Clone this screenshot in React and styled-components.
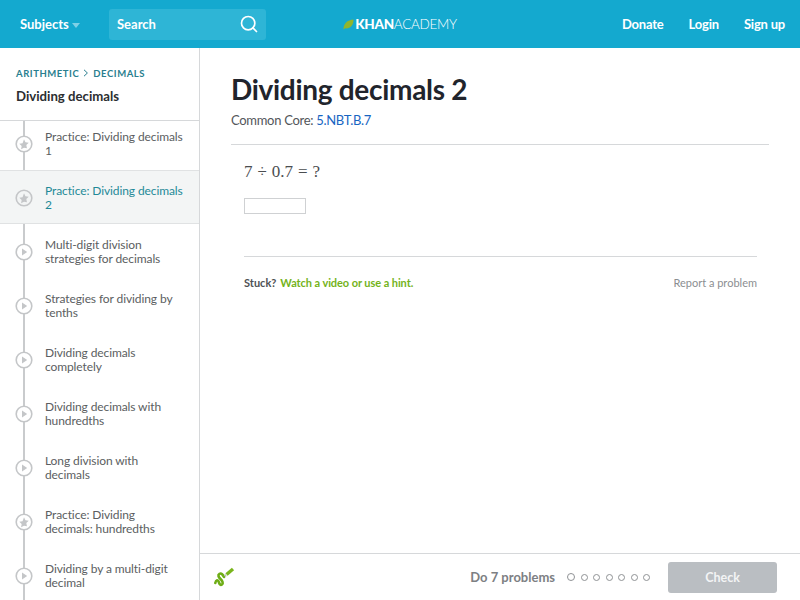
import React from "react";
import styled, { createGlobalStyle } from "styled-components";
import { Search } from "lucide-react";

const GlobalStyle = createGlobalStyle`
  html, body {
    margin: 0;
    height: 100%;
    overflow: hidden;
  }
  body {
    font-family: Lato, "Noto Sans", sans-serif;
    color: #3b3e40;
    background: #fff;
  }
`;

const Page = styled.div`
  width: 800px;
  height: 600px;
  display: flex;
  flex-direction: column;
  overflow: hidden;
`;

const Header = styled.header`
  height: 48px;
  flex: none;
  background: #14a9cf;
  display: grid;
  grid-template-columns: 1fr auto 1fr;
  align-items: center;
  color: #fff;
  font-size: 13px;
  font-weight: 700;
`;

const HeaderLeft = styled.div`
  display: flex;
  align-items: center;
  padding-left: 20px;
`;

const SubjectsMenu = styled.div`
  display: flex;
  align-items: center;
  gap: 3px;
  width: 89px;
`;

const Caret = styled.span`
  width: 0;
  height: 0;
  margin-top: 2px;
  border-left: 4px solid transparent;
  border-right: 4px solid transparent;
  border-top: 5px solid #7fd0e6;
`;

const SearchBox = styled.div`
  width: 157px;
  height: 31px;
  box-sizing: border-box;
  padding: 0 7px 0 8px;
  border-radius: 3px;
  background: #2eb5d6;
  display: flex;
  align-items: center;
  justify-content: space-between;
`;

const Logo = styled.div`
  display: flex;
  align-items: center;
  gap: 1px;
  font-size: 13.5px;
  letter-spacing: -0.3px;
`;

const LogoBold = styled.span`
  font-weight: 900;
`;

const LogoLight = styled.span`
  font-weight: 300;
`;

const HeaderNav = styled.nav`
  display: flex;
  justify-content: flex-end;
  gap: 25px;
  padding-right: 15px;
  letter-spacing: -0.2px;
`;

const Body = styled.div`
  flex: 1;
  min-height: 0;
  display: flex;
`;

const Sidebar = styled.aside`
  width: 200px;
  flex: none;
  box-sizing: border-box;
  border-right: 1px solid #d6d8da;
  overflow: hidden;
`;

const SidebarHead = styled.div`
  height: 73px;
  box-sizing: border-box;
  padding: 19px 16px 0;
  border-bottom: 1px solid #d6d8da;
`;

const Breadcrumb = styled.div`
  display: flex;
  align-items: center;
  gap: 4px;
  height: 12px;
  font-size: 9.5px;
  font-weight: 700;
  letter-spacing: 0.55px;
  color: #2a7f8f;
`;

const SidebarTitle = styled.div`
  margin-top: 9px;
  font-size: 13.2px;
  font-weight: 700;
  color: #2b2e31;
`;

const Lessons = styled.ul`
  list-style: none;
  margin: 0;
  padding: 0;
  position: relative;
`;

const Rail = styled.div`
  position: absolute;
  left: 23px;
  top: 0;
  bottom: 0;
  width: 2px;
  background: #c9cbcd;
`;

const Lesson = styled.li`
  position: relative;
  height: ${(p) => (p.$first ? 49 : 54)}px;
  box-sizing: border-box;
  display: flex;
  align-items: center;
  padding: ${(p) => (p.$first ? "0 14px 3px 45px" : "2px 14px 0 45px")};
  font-size: 12px;
  line-height: 14px;
  letter-spacing: -0.1px;
  color: ${(p) => (p.$active ? "#1f8a98" : "#5b5e61")};
  background: ${(p) => (p.$active ? "#f3f5f5" : "transparent")};
  border-top: ${(p) => (p.$active ? "1px solid #e0e2e3" : "none")};
  border-bottom: ${(p) => (p.$active ? "1px solid #e0e2e3" : "none")};
`;

const Badge = styled.svg`
  position: absolute;
  left: 15px;
  top: 50%;
  width: 18px;
  height: 18px;
  margin-top: ${(p) => (p.$first ? -10.5 : -8)}px;
`;

const Main = styled.main`
  flex: 1;
  min-width: 0;
  display: flex;
  flex-direction: column;
`;

const Content = styled.div`
  flex: 1;
  min-height: 0;
  padding: 0 31px;
`;

const Title = styled.h1`
  margin: 23px 0 0;
  font-size: 28px;
  line-height: 36px;
  font-weight: 700;
  letter-spacing: -0.3px;
  color: #21242c;
`;

const Standard = styled.div`
  height: 38px;
  padding-top: 5px;
  box-sizing: border-box;
  font-size: 13px;
  line-height: 17px;
  letter-spacing: -0.3px;
  color: #53565a;
  border-bottom: 1px solid #d6d8da;
`;

const StandardLink = styled.span`
  color: #1865c2;
`;

const Exercise = styled.div`
  padding: 0 12px 0 13px;
`;

const MathLine = styled.div`
  margin-top: 17px;
  height: 20px;
  font-family: "Liberation Serif", "DejaVu Serif", serif;
  font-size: 17px;
  line-height: 20px;
  color: #4a4d50;
  word-spacing: 0.7px;
`;

const AnswerInput = styled.div`
  width: 62px;
  height: 16px;
  margin-top: 16px;
  box-sizing: border-box;
  border: 1px solid #cfd1d3;
  background: #fff;
`;

const HelpRow = styled.div`
  margin-top: 42px;
  padding-top: 19px;
  border-top: 1px solid #d6d8da;
  display: flex;
  justify-content: space-between;
  font-size: 11px;
  line-height: 14px;
`;

const Stuck = styled.strong`
  color: #4e5154;
`;

const HintLink = styled.span`
  margin-left: 4px;
  font-weight: 700;
  letter-spacing: -0.07px;
  color: #74b31b;
`;

const Report = styled.span`
  color: #8b8e91;
`;

const Footer = styled.footer`
  height: 47px;
  flex: none;
  box-sizing: border-box;
  border-top: 1px solid #d6d8da;
  display: flex;
  align-items: center;
  padding: 0 23px 0 13px;
`;

const FooterProgress = styled.div`
  margin-left: auto;
  display: flex;
  align-items: center;
`;

const ProblemCount = styled.span`
  font-size: 13px;
  font-weight: 700;
  color: #7d8083;
`;

const Dots = styled.div`
  display: flex;
  align-items: center;
  gap: 5.5px;
  margin: 0 18px 0 12px;
`;

const Dot = styled.span`
  width: ${(p) => (p.$big ? 8 : 7)}px;
  height: ${(p) => (p.$big ? 8 : 7)}px;
  box-sizing: border-box;
  border: 1px solid #8f9295;
  border-radius: 50%;
`;

const CheckButton = styled.div`
  width: 109px;
  height: 31px;
  border-radius: 3px;
  background: #babec2;
  color: #f3f4f5;
  font-size: 12.5px;
  font-weight: 700;
  display: flex;
  align-items: center;
  justify-content: center;
`;

const lessons = [
  { title: "Practice: Dividing decimals 1", kind: "star", first: true },
  { title: "Practice: Dividing decimals 2", kind: "star", active: true },
  { title: "Multi-digit division strategies for decimals", kind: "play" },
  { title: "Strategies for dividing by tenths", kind: "play" },
  { title: "Dividing decimals completely", kind: "play" },
  { title: "Dividing decimals with hundredths", kind: "play" },
  { title: "Long division with decimals", kind: "play" },
  { title: "Practice: Dividing decimals: hundredths", kind: "star" },
  { title: "Dividing by a multi-digit decimal", kind: "play" },
];

const Leaf = () => (
  <svg width="11" height="11" viewBox="0 0 12 12">
    <path d="M0.5 11.5C0.5 5 4.5 1 11.5 0.5C11.5 7 7.5 11 2.5 10.2Z" fill="#8fb52e" />
  </svg>
);

const LessonBadge = ({ kind, first, active }) => (
  <Badge $first={first} viewBox="0 0 18 18">
    <circle cx="9" cy="9" r="7.8" fill={active ? "#f3f5f5" : "#fff"} stroke="#c4c6c8" strokeWidth="1.6" />
    {kind === "star" ? (
      <path
        d="M9 4.2l1.45 3.05 3.3.42-2.43 2.28.63 3.3L9 12.65l-2.95 1.6.63-3.3-2.43-2.28 3.3-.42z"
        fill="#c4c6c8"
      />
    ) : (
      <path d="M7 5.4l5.2 3.6L7 12.6z" fill="#c4c6c8" />
    )}
  </Badge>
);

const Scratchpad = () => (
  <svg width="22" height="20" viewBox="0 0 22 20" fill="none">
    <path
      d="M2.3 16C3 12.5 5 12.5 5.8 15S7.5 18.5 9 17.5 9.5 14 7.5 12 4.5 8 6.5 6.8 10 8 11 10"
      stroke="#6ead16"
      strokeWidth="2.6"
      strokeLinecap="round"
    />
    <path d="M13.5 7.5L20 2" stroke="#7ab51d" strokeWidth="3.4" />
    <path d="M11.6 9.2L13 8" stroke="#b8bcae" strokeWidth="2.4" />
  </svg>
);

export default function App() {
  return (
    <Page>
      <GlobalStyle />
      <Header>
        <HeaderLeft>
          <SubjectsMenu>
            Subjects <Caret />
          </SubjectsMenu>
          <SearchBox>
            Search
            <Search size={20} strokeWidth={2} color="#fff" />
          </SearchBox>
        </HeaderLeft>
        <Logo>
          <Leaf />
          <span>
            <LogoBold>KHAN</LogoBold>
            <LogoLight>ACADEMY</LogoLight>
          </span>
        </Logo>
        <HeaderNav>
          <span>Donate</span>
          <span>Login</span>
          <span>Sign up</span>
        </HeaderNav>
      </Header>
      <Body>
        <Sidebar>
          <SidebarHead>
            <Breadcrumb>
              ARITHMETIC
              <svg width="6" height="8" viewBox="0 0 6 8" fill="none">
                <path d="M1 .8L4.4 4 1 7.2" stroke="#2a7f8f" strokeWidth="1" />
              </svg>
              DECIMALS
            </Breadcrumb>
            <SidebarTitle>Dividing decimals</SidebarTitle>
          </SidebarHead>
          <Lessons>
            <Rail />
            {lessons.map((l) => (
              <Lesson key={l.title} $first={l.first} $active={l.active}>
                <LessonBadge kind={l.kind} first={l.first} active={l.active} />
                {l.title}
              </Lesson>
            ))}
          </Lessons>
        </Sidebar>
        <Main>
          <Content>
            <Title>Dividing decimals 2</Title>
            <Standard>
              Common Core: <StandardLink>5.NBT.B.7</StandardLink>
            </Standard>
            <Exercise>
              <MathLine>7 ÷ 0.7 = ?</MathLine>
              <AnswerInput />
              <HelpRow>
                <span>
                  <Stuck>Stuck?</Stuck>
                  <HintLink>Watch a video or use a hint.</HintLink>
                </span>
                <Report>Report a problem</Report>
              </HelpRow>
            </Exercise>
          </Content>
          <Footer>
            <Scratchpad />
            <FooterProgress>
              <ProblemCount>Do 7 problems</ProblemCount>
              <Dots>
                <Dot $big />
                {[1, 2, 3, 4, 5, 6].map((n) => (
                  <Dot key={n} />
                ))}
              </Dots>
              <CheckButton>Check</CheckButton>
            </FooterProgress>
          </Footer>
        </Main>
      </Body>
    </Page>
  );
}
